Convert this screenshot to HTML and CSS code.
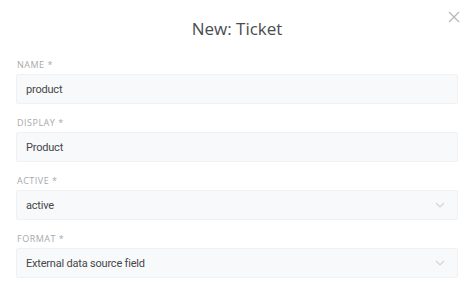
FILE: index.html
```html
<!DOCTYPE html>
<html>
<head>
    <title>New: Ticket</title>
    <link rel="stylesheet" href="styles.css">
</head>
<body>
    <div class="modal">
        <div class="modal-header">
            <h1 class="modal-title">New: Ticket</h1>
            <button class="modal-close" aria-label="Close">
                <svg width="12" height="12" viewBox="0 0 12 12"><path d="M1 1L11 11M11 1L1 11" stroke="#b5b8bb" stroke-width="1.3" fill="none"/></svg>
            </button>
        </div>
        <form class="modal-body">
            <div class="field">
                <label class="field-label">Name *</label>
                <div class="field-control">product</div>
            </div>
            <div class="field">
                <label class="field-label">Display *</label>
                <div class="field-control">Product</div>
            </div>
            <div class="field">
                <label class="field-label">Active *</label>
                <div class="field-control select">
                    <span>active</span>
                    <svg class="chevron" width="10" height="6" viewBox="0 0 10 6"><path d="M1 1L5 5L9 1" stroke="#d3d6d9" stroke-width="1.2" fill="none"/></svg>
                </div>
            </div>
            <div class="field">
                <label class="field-label">Format *</label>
                <div class="field-control select">
                    <span>External data source field</span>
                    <svg class="chevron" width="10" height="6" viewBox="0 0 10 6"><path d="M1 1L5 5L9 1" stroke="#d3d6d9" stroke-width="1.2" fill="none"/></svg>
                </div>
            </div>
        </form>
    </div>
</body>
</html>
```

FILE: styles.css
```css
body {
    margin: 0;
    background: #fff;
    font-family: "Open Sans", "Noto Sans", sans-serif;
    color: #444;
}
.modal {
    width: 474px;
}
.modal-header {
    position: relative;
    height: 59px;
    display: flex;
    justify-content: center;
}
.modal-title {
    margin: 17px 0 0;
    font-size: 17px;
    font-weight: 400;
    line-height: 24px;
    color: #4a4c4e;
}
.modal-close {
    position: absolute;
    top: 11px;
    right: 14px;
    background: none;
    border: none;
    padding: 0;
    width: 12px;
    height: 12px;
    cursor: pointer;
}
.modal-close svg {
    display: block;
}
.modal-body {
    padding: 0 16px;
}
.field {
    margin-bottom: 13px;
}
.field-label {
    display: block;
    padding-left: 1px;
    font-size: 9px;
    line-height: 11px;
    letter-spacing: 0.5px;
    text-transform: uppercase;
    color: #a6a9ac;
    margin-bottom: 4px;
}
.field-control {
    box-sizing: border-box;
    height: 30px;
    padding: 0 9px;
    background: #f8f9fa;
    border: 1px solid #eff1f3;
    border-radius: 2px;
    display: flex;
    align-items: center;
    font-family: Roboto, "Open Sans", sans-serif;
    font-size: 11px;
    letter-spacing: -0.2px;
    color: #45474a;
}
.select {
    justify-content: space-between;
}
.chevron {
    margin-right: 3px;
}
```
